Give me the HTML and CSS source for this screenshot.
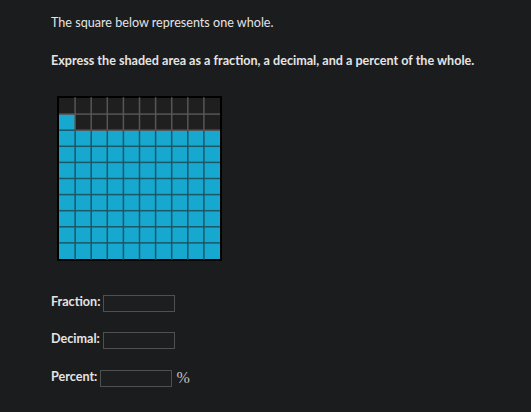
FILE: index.html
```html
<!DOCTYPE html>
<html lang="en">
<head>
<meta charset="utf-8">
<title>Fraction, decimal, percent</title>
<link rel="stylesheet" href="styles.css">
</head>
<body>
<main class="page">
  <p class="intro">The square below represents one whole.</p>
  <p class="task">Express the shaded area as a fraction, a decimal, and a percent of the whole.</p>
  <div class="grid" id="grid"></div>
  <div class="row row-fraction">
    <label class="label" for="fraction">Fraction:</label>
    <input class="field" id="fraction" type="text">
  </div>
  <div class="row row-decimal">
    <label class="label" for="decimal">Decimal:</label>
    <input class="field" id="decimal" type="text">
  </div>
  <div class="row row-percent">
    <label class="label" for="percent">Percent:</label>
    <input class="field field-percent" id="percent" type="text">
    <span class="pct">%</span>
  </div>
</main>
<script src="script.js"></script>
</body>
</html>
```
FILE: script.js
```js
(function () {
  var SIZE = 165, B = 2, N = 10;
  var inner = SIZE - 2 * B;
  var p = inner / N;
  function on(r, c) { return (r === 1 && c === 0) || r >= 2; }
  var GRAY = '#565656', TEAL = '#1c5868', FILL = '#17a8cf', EMPTY = '#1f1f20';
  var s = '<svg xmlns="http://www.w3.org/2000/svg" width="165" height="165" viewBox="0 0 165 165">';
  s += '<rect x="0" y="0" width="165" height="165" fill="#000"/>';
  var r, c;
  for (r = 0; r < N; r++) {
    for (c = 0; c < N; c++) {
      s += '<rect x="' + (B + c * p) + '" y="' + (B + r * p) + '" width="' + p + '" height="' + p + '" fill="' + (on(r, c) ? FILL : EMPTY) + '"/>';
    }
  }
  // vertical lines
  for (c = 1; c < N; c++) {
    for (r = 0; r < N; r++) {
      var col = on(r, c - 1) && on(r, c) ? TEAL : GRAY;
      var x = B + c * p;
      s += '<line x1="' + x + '" y1="' + (B + r * p - 0.75) + '" x2="' + x + '" y2="' + (B + (r + 1) * p + 0.75) + '" stroke="' + col + '" stroke-width="1.5"/>';
    }
  }
  // horizontal lines
  for (r = 1; r < N; r++) {
    for (c = 0; c < N; c++) {
      var col2 = on(r - 1, c) && on(r, c) ? TEAL : GRAY;
      var y = B + r * p;
      s += '<line x1="' + (B + c * p) + '" y1="' + y + '" x2="' + (B + (c + 1) * p) + '" y2="' + y + '" stroke="' + col2 + '" stroke-width="1.5"/>';
    }
  }
  s += '</svg>';
  document.getElementById('grid').innerHTML = s;
})();
```
FILE: styles.css
```css
html, body {
  margin: 0;
  padding: 0;
  background: #1b1c1e;
}

body {
  color: #e4e4e4;
  font-family: Lato, "Open Sans", sans-serif;
  font-size: 12.6px;
}

.page {
  padding: 14px 0 0 51px;
}

.intro {
  margin: 0;
  line-height: 17px;
}

.task {
  margin: 21px 0 0;
  line-height: 17px;
  font-weight: bold;
}

.grid {
  margin: 27px 0 0 6px;
  width: 165px;
  height: 165px;
}

.grid svg {
  display: block;
}

.row {
  display: flex;
  align-items: flex-start;
  line-height: 17px;
  font-weight: bold;
}

.row-fraction {
  margin-top: 32px;
}

.row-decimal {
  margin-top: 17.5px;
}

.row-percent {
  margin-top: 19.5px;
}

.label {
  white-space: nowrap;
}

.field {
  margin: 2px 0 0 3px;
  width: 72px;
  height: 17px;
  box-sizing: border-box;
  border: 1px solid #505050;
  background: #1d1e20;
  padding: 0;
  outline: none;
}

.pct {
  margin: 1px 0 0 4px;
  font-family: "Liberation Serif", serif;
  font-weight: normal;
  font-size: 16px;
  line-height: 18px;
  color: #c4c4c4;
}
```
